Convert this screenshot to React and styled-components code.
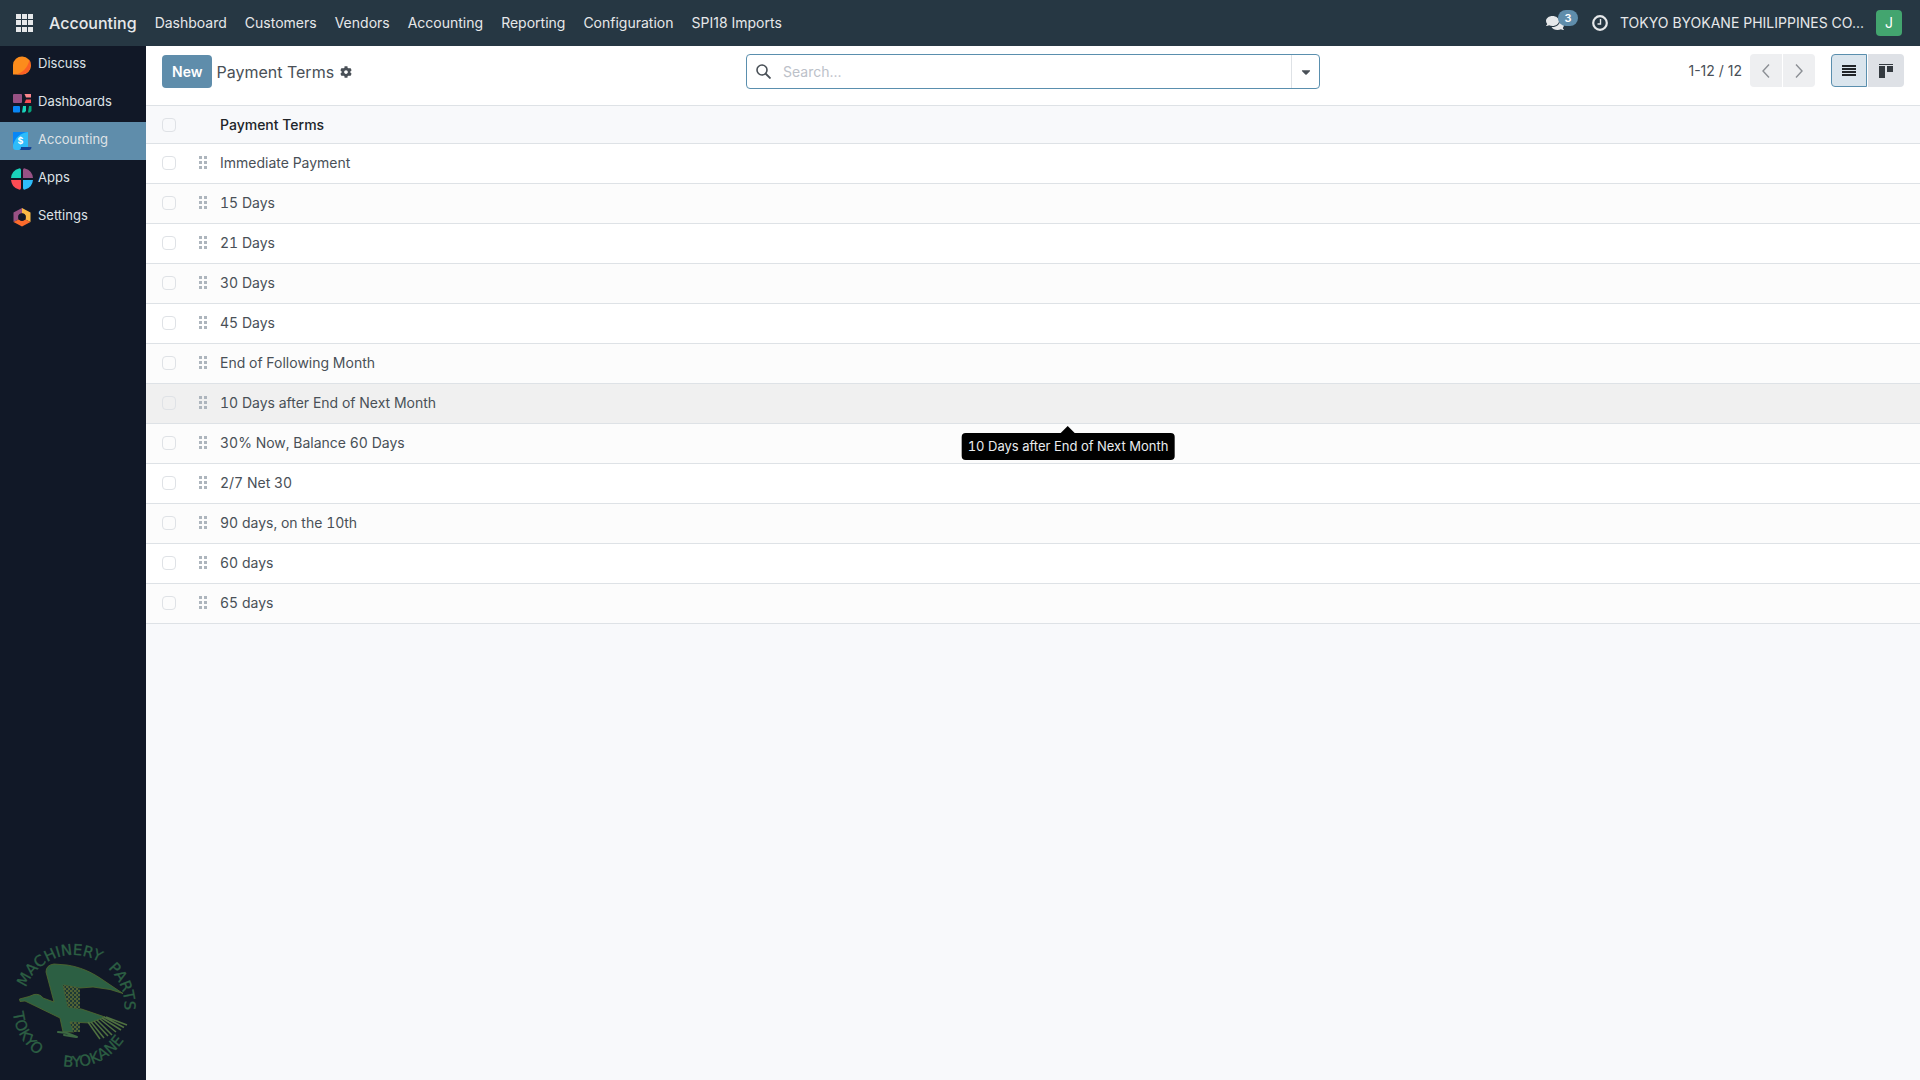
import React from "react";
import styled, { createGlobalStyle } from "styled-components";
import { FaCog, FaComments, FaCaretDown } from "react-icons/fa";

const Global = createGlobalStyle`
  * { box-sizing: border-box; }
  body { margin: 0; background: #f8f9fb; }
  body, button, input { font-family: Inter, "Liberation Sans", sans-serif; font-size: 14px; line-height: 20px; }
`;

const Page = styled.div`
  display: flex;
  flex-direction: column;
  min-height: 100vh;
  color: #495057;
`;

const Navbar = styled.header`
  display: flex;
  align-items: center;
  height: 46px;
  padding: 0 18px 0 16px;
  background: #263743;
  color: #e6e8ea;
`;

const IconButton = styled.button`
  display: flex;
  align-items: center;
  padding: 0;
  border: 0;
  background: none;
  color: inherit;
  cursor: pointer;
`;

const Brand = styled.a`
  margin: 0 18px 0 16px;
  font-size: 16px;
  font-weight: 500;
  color: inherit;
  text-decoration: none;
`;

const Menu = styled.nav`
  display: flex;
  gap: 18px;
  flex: 1;
`;

const MenuLink = styled.a`
  color: inherit;
  text-decoration: none;
  white-space: nowrap;
`;

const Systray = styled.div`
  display: flex;
  align-items: center;
  gap: 12px;
`;

const Messages = styled(IconButton)`
  position: relative;
  width: 34px;
  height: 26px;
`;

const Badge = styled.span`
  position: absolute;
  left: 12px;
  top: 0;
  width: 20px;
  height: 16px;
  border-radius: 8px;
  background: #5f8dab;
  color: #fff;
  font-size: 11px;
  font-weight: 600;
  line-height: 16px;
  text-align: center;
`;

const Avatar = styled.button`
  width: 26px;
  height: 26px;
  padding: 0;
  border: 0;
  border-radius: 4px;
  background: #43a56f;
  color: #fff;
`;

const Body = styled.div`
  display: flex;
  flex: 1;
`;

const Sidebar = styled.aside`
  display: flex;
  flex-direction: column;
  justify-content: space-between;
  width: 146px;
  background: #111827;
`;

const AppLink = styled.a`
  display: flex;
  align-items: center;
  gap: 5px;
  height: 38px;
  padding-left: 11px;
  background: ${(p) => (p.$active ? "#5f8dab" : "transparent")};
  color: #dee2e6;
  font-size: 13px;
  text-decoration: none;

  svg { flex: none; }
  span { padding-bottom: 4px; }
`;

const LogoBox = styled.div`
  display: flex;
  justify-content: center;
  padding-bottom: 4px;
`;

const Main = styled.main`
  flex: 1;
  min-width: 0;
`;

const ControlPanel = styled.div`
  display: grid;
  grid-template-columns: 1fr 574px 1fr;
  align-items: start;
  padding: 8px 16px 16px;
  background: #fff;
`;

const Crumbs = styled.div`
  display: flex;
  align-items: center;
  gap: 4px;
  height: 35px;
`;

const NewButton = styled.button`
  height: 33px;
  padding: 0 10px;
  border: 0;
  border-radius: 4px;
  background: #5f8dab;
  color: #fff;
  font-weight: 600;
`;

const Title = styled.h1`
  margin: 0 2px 0 0;
  font-size: 16px;
  font-weight: 400;
`;

const SearchBox = styled.div`
  display: flex;
  align-items: center;
  height: 35px;
  border: 1px solid #5a8fae;
  border-radius: 4px;
  padding-left: 9px;
`;

const SearchInput = styled.input`
  flex: 1;
  min-width: 0;
  margin-left: 12px;
  padding: 0;
  border: 0;
  outline: 0;
  background: none;
  color: #495057;
  &::placeholder { color: #bcc1c9; opacity: 1; }
`;

const SearchToggle = styled(IconButton)`
  align-self: stretch;
  justify-content: center;
  width: 28px;
  border-left: 1px solid #dee2e6;
`;

const Tools = styled.div`
  display: flex;
  align-items: center;
  justify-content: flex-end;
  height: 33px;
`;

const Pager = styled.div`
  display: flex;
  gap: 1px;
  margin: 0 16px 0 8px;
`;

const PagerButton = styled(IconButton)`
  justify-content: center;
  width: 32px;
  height: 33px;
  border-radius: ${(p) => (p.$end ? "0 4px 4px 0" : "4px 0 0 4px")};
  background: #eeeff1;
  color: #8b8f94;
`;

const Views = styled.div`
  display: flex;
  gap: 1px;
`;

const ViewButton = styled(PagerButton)`
  width: 36px;
  border: ${(p) => (p.$active ? "1px solid #5a8fae" : "0")};
  background: ${(p) => (p.$active ? "#dae5ed" : "#dee1e6")};
  color: #212529;
`;

const Table = styled.table`
  width: 100%;
  border-collapse: separate;
  border-spacing: 0;
  table-layout: fixed;
  font-variant-numeric: tabular-nums;
`;

const HeadCell = styled.th`
  height: 39px;
  width: ${(p) => p.$w || "auto"};
  padding: 0 0 0 ${(p) => p.$pad || "0"};
  border-top: 1px solid #dee2e6;
  border-bottom: 1px solid #dee2e6;
  background: #f8f9fb;
  color: #212529;
  font-weight: 500;
  text-align: left;
`;

const Row = styled.tr`
  background: ${(p) => (p.$hover ? "#f0f0f0" : "#fff")};
  &:nth-child(even) { background: #fcfcfc; }
`;

const Cell = styled.td`
  height: 40px;
  padding: 0 0 2px ${(p) => p.$pad || "0"};
  border-bottom: 1px solid #dee2e6;
`;

const Check = styled.input`
  appearance: none;
  display: block;
  width: 14px;
  height: 14px;
  margin: 0;
  border: 1px solid #dfe2e6;
  border-radius: 4px;
`;

const TipAnchor = styled.div`
  position: relative;
  margin-left: -4px;
`;

const Tooltip = styled.div`
  position: absolute;
  top: 20px;
  left: 50%;
  transform: translateX(-50%);
  padding: 4px 6px;
  border-radius: 4px;
  background: #000;
  color: #e9ecef;
  font-size: 13px;
  line-height: 19px;
  white-space: nowrap;

  &::before {
    content: "";
    position: absolute;
    left: 50%;
    top: -7px;
    margin-left: -8px;
    border: 8px solid transparent;
    border-top: 0;
    border-bottom-color: #000;
  }
`;

const DiscussIcon = () => (
  <svg width="22" height="22" viewBox="0 0 22 22">
    <path d="M2 20.500V11a9 9 0 1 1 9 9.500z" fill="#fc8c1c" />
    <path d="M18.500 5.500c3 6 0 15-7.500 15H3c8 0 14-7 15.500-15z" fill="#fb5f24" />
  </svg>
);
const DashboardsIcon = () => (
  <svg width="22" height="22" viewBox="0 0 22 22">
    <rect x="2" y="2" width="9" height="9" rx="1" fill="#985184" />
    <path d="M13.500 2H20v3.500h-5z" fill="#fc868b" />
    <path d="M15 7.500h5V11h-6.500z" fill="#f74c54" />
    <rect x="2" y="14" width="7" height="6.500" rx="1" fill="#0886f5" />
    <path d="M12 14h3v5l-1.500 1.500H11z" fill="#1ad3bb" />
    <path d="M18 14h2.500v5L19 20.500h-2z" fill="#05a37c" />
  </svg>
);
const AccountingIcon = () => (
  <svg width="22" height="22" viewBox="0 0 22 22">
    <path d="M2 2h15v18H5a3 3 0 0 1-3-3z" fill="#2ebcfa" />
    <path d="M2 2h15C9 3 4 8 2 15z" fill="#0886f5" />
    <path d="M10 17h10.500c0 2-1 3-2.500 3H8c1.500 0 2-1 2-3z" fill="#144496" />
    <text x="9.500" y="14" fontSize="9" fontWeight="700" textAnchor="middle" fill="#fff">$</text>
  </svg>
);
const AppsIcon = () => (
  <svg width="22" height="22" viewBox="0 0 22 22">
    <path d="M10 10H0A11 11 0 0 1 8 .4Q10 0 10 2z" fill="#1ad3bb" />
    <path d="M12 10h10A11 11 0 0 0 14 .4Q12 0 12 2z" fill="#985184" />
    <path d="M10 12H0a11 11 0 0 0 8 9.600Q10 22 10 20z" fill="#fc4c54" />
    <path d="M12 12h10a11 11 0 0 1-8 9.600Q12 22 12 20z" fill="#2ebcfa" />
  </svg>
);
const SettingsIcon = () => (
  <svg width="22" height="22" viewBox="0 0 22 22">
    <path d="M11 2v5.500L7.500 9.500v4L2.500 16V6.500z" fill="#985184" />
    <path d="M11 2l8.500 4.500V16l-5-2.500v-4L11 7.500z" fill="#fbb945" />
    <path d="M2.500 16l5-2.500L11 15l3.500-1.500 5 2.500L11 20.500z" fill="#fc6b2c" />
    <circle cx="11" cy="11" r="3.800" fill="#111827" />
  </svg>
);

const CompanyLogo = () => (
  <svg width="146" height="138" viewBox="-10 -4 146 138" role="img" aria-label="Machinery Parts Tokyo Byokane">
    <defs>
      <path id="upperArc" d="M12.500 64a51 51 0 0 1 102 0a51 51 0 0 1-102 0" />
      <path id="lowerArc" d="M2.500 64a61 61 0 0 0 122 0" />
      <pattern id="weave" width="4" height="4" patternUnits="userSpaceOnUse">
        <rect width="4" height="4" fill="#1d3935" />
        <path d="M0 1h2.500M2 3h2" stroke="#858a35" strokeWidth="1.200" />
      </pattern>
    </defs>
    <g fill="#2c5f43" stroke="#2c5f43" strokeWidth="0.300" fontSize="15" fontFamily="DejaVu Sans, sans-serif" textAnchor="middle">
      <text><textPath href="#upperArc" startOffset="63">MACHINERY</textPath></text>
      <text><textPath href="#upperArc" startOffset="141">PARTS</textPath></text>
      <text><textPath href="#lowerArc" startOffset="32">TOKYO</textPath></text>
      <text><textPath href="#lowerArc" startOffset="120">BYOKANE</textPath></text>
    </g>
    <path
      d="M9.500 57L19 54.500 24 52.500q6-1 9 3.500L44 60 36 30q0-7 8-8l13 1c13 2 24 7 33 13l23 15.500L100 47.500 83 45l-13 1-17-3 5 22 13.500 2L95 75l-15 6-20-1 4 10H53L50 76 15 59l-5 .5z"
      fill="#2c5f43"
      stroke="#53692f"
      strokeWidth="0.800"
    />
    <path d="M53 43l17 3v21l-12-2z" fill="url(#weave)" />
    <path d="M60 80h10v10h-7z" fill="url(#weave)" />
    <path
      d="M78 80l12 17M81 80l13 16M84 79l14 15M87 78l15 15M90 77l16 13M92 76l19 12M94 75l20 10.500M96 75l21 8"
      stroke="#4f7040"
      strokeWidth="1.600"
    />
    <path d="M48 90l9 1 10 4M54 93l12 2" stroke="#3d6943" strokeWidth="2" fill="none" strokeLinecap="round" />
  </svg>
);

const menu = ["Dashboard", "Customers", "Vendors", "Accounting", "Reporting", "Configuration", "SPI18 Imports"];
const apps = [
  ["Discuss", DiscussIcon],
  ["Dashboards", DashboardsIcon],
  ["Accounting", AccountingIcon],
  ["Apps", AppsIcon],
  ["Settings", SettingsIcon],
];
const terms = [
  "Immediate Payment", "15 Days", "21 Days", "30 Days", "45 Days", "End of Following Month",
  "10 Days after End of Next Month", "30% Now, Balance 60 Days", "2/7 Net 30",
  "90 days, on the 10th", "60 days", "65 days",
];
const hovered = "10 Days after End of Next Month";

const Grip = () => (
  <svg width="10" height="13" viewBox="0 0 10 13" fill="#adb5bd" display="block">
    {[0, 5, 10].map((y) => (
      <React.Fragment key={y}>
        <rect x="1" y={y} width="3" height="3" />
        <rect x="6" y={y} width="3" height="3" />
      </React.Fragment>
    ))}
  </svg>
);

export default function App() {
  return (
    <Page>
      <Global />
      <Navbar>
        <IconButton aria-label="Home menu">
          <svg width="17" height="18" viewBox="0 0 17 18" fill="currentColor">
            {[0, 6, 12].map((x) => [0, 6, 13].map((y) => (
              <rect key={`${x}-${y}`} x={x} y={y} width="5" height="5" />
            )))}
          </svg>
        </IconButton>
        <Brand href="#">Accounting</Brand>
        <Menu>{menu.map((m) => <MenuLink href="#" key={m}>{m}</MenuLink>)}</Menu>
        <Systray>
          <Messages aria-label="Messages, 3 unread">
            <FaComments size={18} />
            <Badge>3</Badge>
          </Messages>
          <IconButton aria-label="Activities">
            <svg width="16" height="16" viewBox="0 0 16 16" fill="none" stroke="currentColor">
              <circle cx="8" cy="8" r="6.800" strokeWidth="2.200" />
              <path d="M8.500 4v5H5.500" strokeWidth="1.400" />
            </svg>
          </IconButton>
          <MenuLink href="#">TOKYO BYOKANE PHILIPPINES CO...</MenuLink>
          <Avatar aria-label="User J">J</Avatar>
        </Systray>
      </Navbar>
      <Body>
        <Sidebar>
          <nav>
            {apps.map(([name, Icon]) => (
              <AppLink href="#" key={name} $active={name === "Accounting"}>
                <Icon />
                <span>{name}</span>
              </AppLink>
            ))}
          </nav>
          <LogoBox><CompanyLogo /></LogoBox>
        </Sidebar>
        <Main>
          <ControlPanel>
            <Crumbs>
              <NewButton>New</NewButton>
              <Title>Payment Terms</Title>
              <IconButton aria-label="Actions"><FaCog size={12} /></IconButton>
            </Crumbs>
            <SearchBox>
              <svg width="15" height="15" viewBox="0 0 15 15" fill="none" stroke="#495057">
                <circle cx="6" cy="6" r="5" strokeWidth="1.600" />
                <path d="M9.500 9.500l5 5" strokeWidth="1.800" />
              </svg>
              <SearchInput aria-label="Search" placeholder="Search..." />
              <SearchToggle aria-label="Toggle search panel"><FaCaretDown size={14} /></SearchToggle>
            </SearchBox>
            <Tools>
              <span>1-12 / 12</span>
              <Pager>
                <PagerButton aria-label="Previous">
                  <svg width="8" height="14" viewBox="0 0 8 14" fill="none" stroke="currentColor" strokeWidth="1.400"><path d="M7 .5L1 7l6 6.500" /></svg>
                </PagerButton>
                <PagerButton $end aria-label="Next">
                  <svg width="8" height="14" viewBox="0 0 8 14" fill="none" stroke="currentColor" strokeWidth="1.400"><path d="M1 .5L7 7l-6 6.500" /></svg>
                </PagerButton>
              </Pager>
              <Views>
                <ViewButton $active aria-label="List view">
                  <svg width="14" height="11" viewBox="0 0 14 11" fill="currentColor"><path d="M0 0h14v2H0zM0 3h14v2H0zM0 6h14v2H0zM0 9h14v2H0z" /></svg>
                </ViewButton>
                <ViewButton $end aria-label="Kanban view">
                  <svg width="14" height="14" viewBox="0 0 14 14" fill="#343a40"><path d="M0 0h14v1H0zM0 2h6v12H0zM8 2h6v6H8z" /></svg>
                </ViewButton>
              </Views>
            </Tools>
          </ControlPanel>
          <Table>
            <thead>
              <tr>
                <HeadCell $w="52px" $pad="16px"><Check type="checkbox" aria-label="Select all" /></HeadCell>
                <HeadCell $w="18px" />
                <HeadCell $pad="4px">Payment Terms</HeadCell>
              </tr>
            </thead>
            <tbody>
              {terms.map((t) => (
                <Row key={t} $hover={t === hovered}>
                  <Cell $pad="16px"><Check type="checkbox" aria-label={`Select ${t}`} /></Cell>
                  <Cell><Grip /></Cell>
                  <Cell $pad="4px">
                    {t}
                    {t === hovered && <TipAnchor><Tooltip role="tooltip">{t}</Tooltip></TipAnchor>}
                  </Cell>
                </Row>
              ))}
            </tbody>
          </Table>
        </Main>
      </Body>
    </Page>
  );
}
